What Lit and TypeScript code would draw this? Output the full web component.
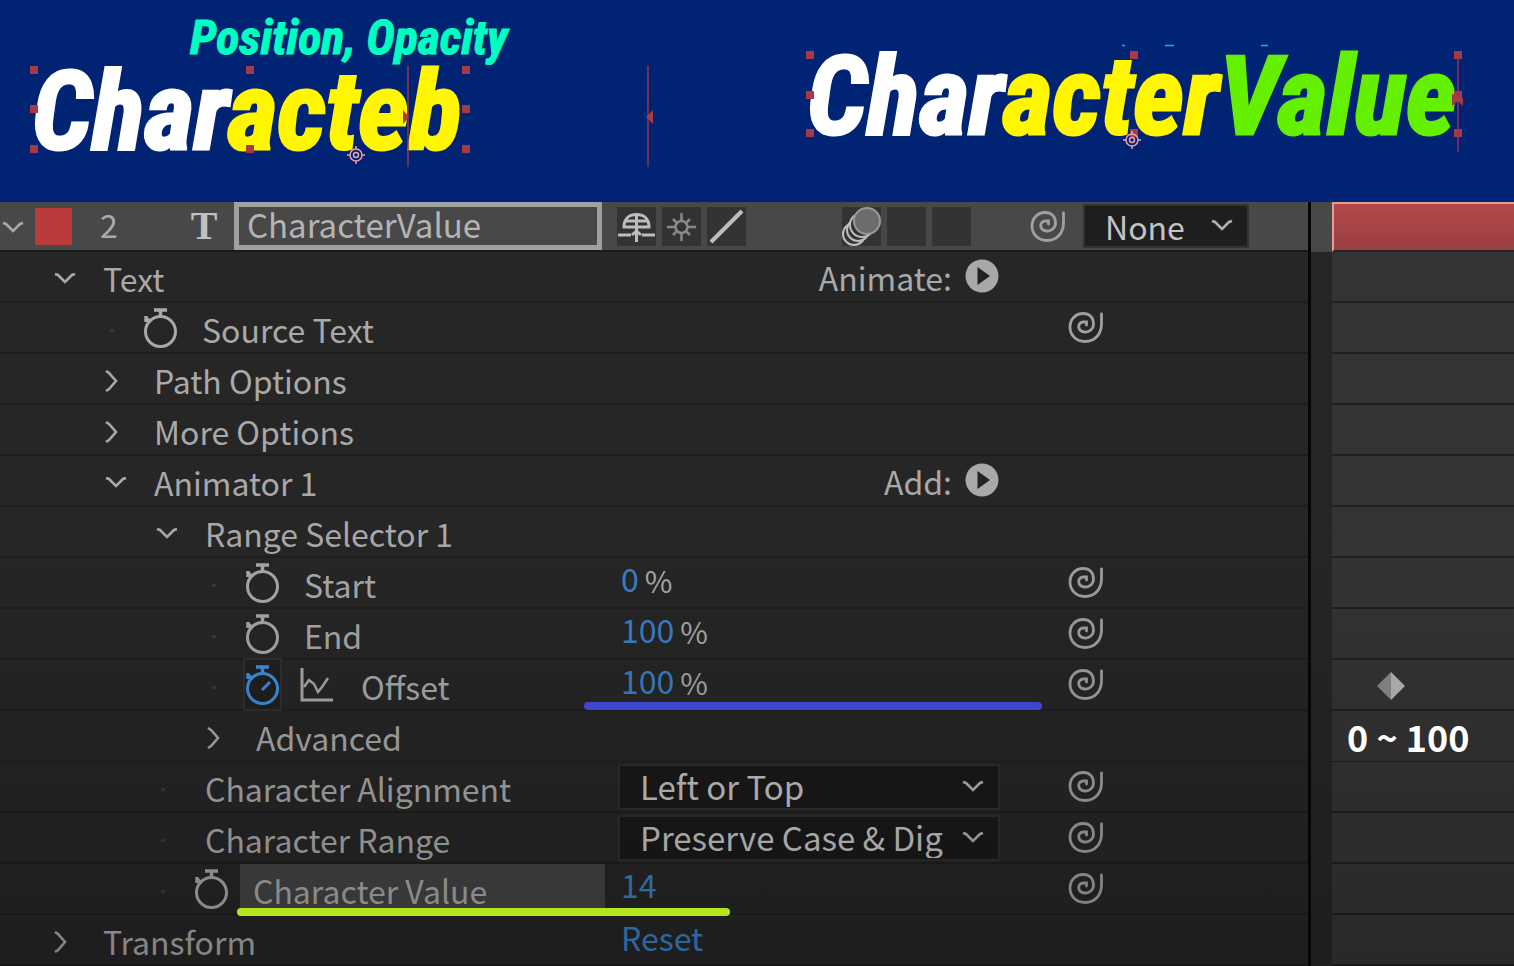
import { LitElement, html, svg, css, nothing } from "lit";
import { customElement, property } from "lit/decorators.js";
import { classMap } from "lit/directives/class-map.js";

type Row = {
  label: string;
  level: number;
  twirl?: "open" | "closed";
  watch?: "off" | "on";
  graph?: boolean;
  menu?: string;
  value?: string;
  unit?: string;
  select?: string;
  reset?: boolean;
  link?: boolean;
  selected?: boolean;
  key?: boolean;
  note?: string;
  mark?: "blue" | "lime";
};

const ROWS: Row[] = [
  { label: "Text", level: 0, twirl: "open", menu: "Animate:" },
  { label: "Source Text", level: 1, watch: "off", link: true },
  { label: "Path Options", level: 1, twirl: "closed" },
  { label: "More Options", level: 1, twirl: "closed" },
  { label: "Animator 1", level: 1, twirl: "open", menu: "Add:" },
  { label: "Range Selector 1", level: 2, twirl: "open" },
  { label: "Start", level: 3, watch: "off", value: "0", unit: "%", link: true },
  { label: "End", level: 3, watch: "off", value: "100", unit: "%", link: true },
  { label: "Offset", level: 3, watch: "on", graph: true, value: "100", unit: "%", link: true, key: true, mark: "blue" },
  { label: "Advanced", level: 3, twirl: "closed", note: "0 ~ 100" },
  { label: "Character Alignment", level: 2, select: "Left or Top", link: true },
  { label: "Character Range", level: 2, select: "Preserve Case & Dig", link: true },
  { label: "Character Value", level: 2, watch: "off", value: "14", link: true, selected: true, mark: "lime" },
  { label: "Transform", level: 0, twirl: "closed", reset: true },
];

const chevronDown = html`<svg width="24" height="14" viewBox="0 0 24 14" fill="none" stroke="currentColor" stroke-width="2.6"><path d="M2 2 5 3 12 10 19 3 22 2"/></svg>`;
const chevronRight = html`<svg width="24" height="24" viewBox="0 0 24 24" fill="none" stroke="currentColor" stroke-width="2.6"><path d="M2 2 5 4 12 12 5 20 2 22"/></svg>`;
const spiral = html`<svg width="36" height="31" viewBox="0 0 36 31" fill="none" stroke="currentColor" stroke-width="2.8" stroke-linecap="round"><path d="M33.500 2V12C33.500 22 27 29.500 17 29.500C8 29.500 2 23 2 15C2 7 8 1.500 15 1.500C22 1.500 25.500 6 25.500 12C25.500 17 21 20.500 17 20C9.500 19.500 8.500 11 15 10L18.500 10V13"/></svg>`;
const stopwatch = (on: boolean) => html`<svg width="35" height="40" viewBox="0 0 35 40" fill="none" stroke="currentColor" stroke-width="3"><circle cx="17.500" cy="23.500" r="15"/><path d="M11 2H24M17.500 2V9M3 8V14M3 10 8 14" stroke-width="3.5"/>${on ? svg`<path d="M17 25 25 17" stroke-width="3"/>` : nothing}</svg>`;
const graphIcon = html`<svg width="34" height="36" viewBox="0 0 34 36" fill="none" stroke="currentColor"><path d="M2 1V33H33" stroke-width="3"/><path d="M4 20 9 13 14 17 18 25 22 20 28 11" stroke-width="2.5"/></svg>`;
const playIcon = html`<svg width="34" height="34" viewBox="0 0 34 34"><circle cx="17" cy="17" r="16.500" fill="currentColor"/><path d="M12.500 8V26L25 17Z" fill="#232323"/></svg>`;

@customElement("text-viewport")
class TextViewport extends LitElement {
  @property() side: "left" | "right" = "left";

  static styles = css`
    :host { display: block; flex: 1 1 0; min-width: 0; position: relative; height: 202px; }
    .title, .caption { position: absolute; margin: 0; white-space: nowrap; font-family: "Roboto Condensed", Roboto, sans-serif; font-style: italic; font-weight: 700; }
    .title { font-size: 109px; line-height: 80px; -webkit-text-stroke: 3px currentColor; }
    .left .title { left: 32px; top: 72px; }
    .right .title { left: 50px; top: 57px; }
    .caption { font-size: 48px; line-height: 48px; left: 190px; top: 14px; color: #00ffc0; -webkit-text-stroke: 1px currentColor; }
    .white { color: #fff; }
    .yellow { color: #fff600; }
    .green { color: #64f000; }
    .overlay { position: absolute; inset: 0; width: 757px; height: 202px; overflow: visible; }
  `;

  private handles(xs: number[], ys: number[]) {
    return ys.flatMap((y, j) => xs.filter((_, i) => !(i === 1 && j === 1)).map((x) => svg`<rect x=${x - 4} y=${y - 4} width="8" height="8" fill="#a83a45"/>`));
  }

  private anchor(x: number, y: number) {
    return svg`<g transform="translate(${x} ${y})" fill="none" stroke="#f3a0a8" stroke-width="1.5"><circle r="6"/><circle r="2.500"/><path d="M0-9V-6M0 6V9M-9 0H-6M6 0H9"/></g>`;
  }

  render() {
    if (this.side === "left") {
      return html`<div class="left">
        <p class="caption">Position, Opacity</p>
        <p class="title"><span class="white">Char</span><span class="yellow">acteb</span></p>
        <svg class="overlay">
          ${this.handles([34, 250, 466], [70, 109, 149])}
          <path d="M408 66V167M648 66V167" stroke="#8f3350" stroke-width="1.500"/>
          <path d="M403 110V124L409 117ZM653 110V124L646 117Z" fill="#a83a45"/>
          ${this.anchor(356, 155)}
        </svg>
      </div>`;
    }
    return html`<div class="right">
      <p class="title"><span class="white">Char</span><span class="yellow">acter</span><span class="green">Value</span></p>
      <svg class="overlay">
        ${this.handles([53, 377, 701], [55, 95, 133])}
        <path d="M701 55V152" stroke="#8f3350" stroke-width="1.500"/>
        <path d="M695 94V106L701 101 706 106V98Z" fill="#a83a45"/>
        <path d="M365 45.500H368M408 45.500H417M504 45.500H511" stroke="#14b8cf" stroke-width="1.500"/>
        ${this.anchor(375, 140)}
      </svg>
    </div>`;
  }
}

@customElement("app-root")
class AppRoot extends LitElement {
  static styles = css`
    :host { display: block; min-height: 100vh; background: #252525; color: #a9a9a9; font: 32px/50px "Noto Sans CJK KR", "Noto Sans", sans-serif; font-weight: 400; }
    * { box-sizing: border-box; }
    svg { display: block; flex: none; }
    button, input, select { font: inherit; color: inherit; background: none; border: 0; padding: 0; margin: 0; border-radius: 0; }
    .preview { display: flex; background: #002473; overflow: hidden; }
    .timeline { position: relative; }
    .timeline::after { content: ""; position: absolute; inset: 0; pointer-events: none; background: linear-gradient(transparent 40%, rgba(0, 0, 0, .22)); }
    .row { display: grid; grid-template-columns: minmax(0, 1fr) 206px; height: 51px; position: relative; }
    .props { display: grid; grid-template-columns: 618px 382px 1fr; background: #262626; border-bottom: 2px solid #1e1e1e; min-width: 0; }
    .track { border-left: 3px solid #060606; background: #262626; padding-left: 21px; display: grid; min-width: 0; }
    .lane { background: #343434; border-bottom: 2px solid #202020; display: flex; align-items: center; white-space: nowrap; }
    .name { display: flex; align-items: center; min-width: 0; height: 49px; }
    .twirl { width: 92px; flex: none; padding: 5px 0 0 53px; height: 49px; display: flex; align-items: center; }
    .dot::before { content: ""; width: 4px; height: 3px; margin-left: 6px; background: #393939; }
    .label { margin-left: 11px; height: 49px; padding-top: 2px; line-height: 49px; white-space: nowrap; }
    .timed { padding-left: 13px; }
    .selected { background: #444; flex: 1; margin-right: 13px; }
    .watch { width: 35px; height: 49px; display: flex; align-items: center; justify-content: center; }
    .on { color: #3f8fe0; background: #202020; outline: 2px solid #303030; }
    .graph { margin: 0 3px 0 20px; }
    .value { display: flex; align-items: center; height: 45px; line-height: 45px; min-width: 0; white-space: nowrap; }
    .number { color: #3b80c4; height: 44px; padding-bottom: 4px; margin-left: 3px; }
    .unit { margin-left: 6px; font-size: 30px; }
    .reset { color: #3b80c4; margin-left: 3px; }
    .menu { flex: 1; display: flex; align-items: center; justify-content: flex-end; gap: 13px; height: 49px; padding-right: 1px; }
    .menu svg { margin-top: 2px; }
    .menu .word { padding-top: 5px; }
    .picker { position: relative; display: grid; align-items: center; width: 100%; height: 46px; margin-top: 4px; color: #c4c4c4; }
    .picker select { appearance: none; width: 100%; height: 46px; padding: 0 46px 0 20px; font-size: 33px; background: #191919; border: 2px solid #2d2d2d; line-height: 41px; }
    .picker svg { position: absolute; right: 15px; color: #b0b0b0; pointer-events: none; }
    .link { padding-left: 68px; display: flex; align-items: center; height: 48px; color: #a0a0a0; }
    .mark { position: absolute; height: 8px; border-radius: 4px; z-index: 1; }
    .blue { left: 584px; width: 458px; bottom: 1px; background: #3f48cc; }
    .lime { left: 237px; width: 493px; bottom: -1px; background: #b5e61d; }
    .note { position: relative; z-index: 1; padding-left: 15px; color: #fff; font-size: 36px; font-weight: 700; }
    .key { margin: 3px 0 0 45px; }

    .head { height: 50px; }
    .head .props { display: flex; align-items: center; background: #484848; border-bottom-color: #1b1b1b; }
    .head .track { background: #484848; }
    .head .lane { background: #a84447 linear-gradient(#b3484a, #993f42); border: 2px solid #e89a98; border-right: 0; border-bottom-color: #252525; }
    .head .tw { width: 35px; display: flex; padding: 4px 0 0 1px; }
    .swatch { width: 37px; height: 37px; background: #b93b3b; border-radius: 2px; }
    .index { width: 62px; text-align: center; margin-left: 6px; line-height: 42px; height: 46px; }
    .kind { width: 60px; margin-left: 34px; text-align: center; font-family: "Liberation Serif", serif; font-weight: 700; font-size: 40px; line-height: 46px; color: #c0c0c0; }
    .layer { width: 368px; height: 48px; border: 5px solid #a0a0a0; padding: 0 8px 4px; font-size: 33px; color: #b4b4b4; line-height: 34px; }
    .switches { display: flex; gap: 6px; margin-left: 15px; }
    .switches + .switches { margin-left: 96px; }
    .switch { width: 39px; height: 39px; background: #333; display: grid; place-items: center; color: #bdbdbd; }
    .head .spiral { width: 36px; margin-left: 59px; color: #a0a0a0; }
    .head .picker { width: 166px; margin: 0 0 0 17px; height: 44px; }
    .head .picker select { height: 44px; background: #1e1e1e; border-color: #333; padding-bottom: 4px; font-size: 32px; }
  `;

  private twirl(row: Row) {
    if (!row.twirl) return html`<span class="twirl dot"></span>`;
    return html`<button class="twirl" aria-label="Toggle ${row.label}">${row.twirl === "open" ? chevronDown : chevronRight}</button>`;
  }

  private picker(name: string, text: string) {
    return html`<div class="picker"><select aria-label=${name}><option>${text}</option></select>${chevronDown}</div>`;
  }

  private value(row: Row) {
    if (row.menu) return html`<div class="menu"><span class="word">${row.menu}</span><button aria-label="${row.menu}">${playIcon}</button></div>`;
    if (row.select) return this.picker(row.label, row.select);
    if (row.reset) return html`<button class="reset">Reset</button>`;
    if (row.value) return html`<input class="number" aria-label=${row.label} .value=${row.value} style="width:${row.value.length}ch">${row.unit ? html`<span class="unit">${row.unit}</span>` : nothing}`;
    return nothing;
  }

  private row(row: Row) {
    return html`<div class="row">
      <div class="props">
        <div class="name" style="padding-left:${row.level * 51}px">
          ${this.twirl(row)}
          ${row.watch ? html`<button class=${classMap({ watch: true, on: row.watch === "on" })} aria-label="Time-vary ${row.label}">${stopwatch(row.watch === "on")}</button>` : nothing}
          ${row.graph ? html`<button class="graph" aria-label="Graph">${graphIcon}</button>` : nothing}
          <span class=${classMap({ label: true, timed: !!row.watch, selected: !!row.selected })}>${row.label}</span>
        </div>
        <div class="value">${this.value(row)}</div>
        <div class="link">${row.link ? html`<button aria-label="Expression for ${row.label}">${spiral}</button>` : nothing}</div>
      </div>
      <div class="track"><div class="lane">
        ${row.key ? html`<svg class="key" width="28" height="28" viewBox="0 0 28 28"><path d="M14 0V28L0 14Z" fill="#8a8a8a"/><path d="M14 0V28L28 14Z" fill="#b8b8b8"/></svg>` : nothing}
        ${row.note ? html`<span class="note">${row.note}</span>` : nothing}
      </div></div>
      ${row.mark ? html`<i class="mark ${row.mark}"></i>` : nothing}
    </div>`;
  }

  render() {
    return html`
      <div class="preview"><text-viewport side="left"></text-viewport><text-viewport side="right"></text-viewport></div>
      <div class="timeline">
        <div class="row head">
          <div class="props">
            <button class="tw" aria-label="Toggle layer">${chevronDown}</button>
            <button class="swatch" aria-label="Layer colour"></button>
            <span class="index">2</span>
            <span class="kind">T</span>
            <input class="layer" aria-label="Layer name" .value=${"CharacterValue"}>
            <div class="switches">
              <button class="switch" aria-label="Shy"><svg width="39" height="39" viewBox="0 0 39 39" fill="none" stroke="currentColor" stroke-width="3"><path d="M7 20C7 11 13 7.500 19.500 7.500S32 11 32 20ZM19.500 7V35M9 14H30M1 28H14M25 28H38M15 28 19.500 24 24 28"/></svg></button>
              <button class="switch" aria-label="Collapse"><svg width="39" height="39" viewBox="0 0 39 39" fill="none" stroke="#888" stroke-width="2.5"><circle cx="19.500" cy="20" r="6"/><path d="M19.500 6V14M19.500 26V34M5 20H13M26 20H34M11 12 15 16M24 24 28 28M28 12 24 16M15 24 11 28"/></svg></button>
              <button class="switch" aria-label="Quality"><svg width="39" height="39" viewBox="0 0 39 39" fill="none" stroke="currentColor" stroke-width="4"><path d="M4 35 35 4"/></svg></button>
            </div>
            <div class="switches">
              <button class="switch" aria-label="Motion blur"><svg width="39" height="39" viewBox="0 0 39 39" stroke="currentColor" stroke-width="2" fill="#333"><circle cx="12" cy="27" r="11"/><circle cx="16" cy="23" r="11"/><circle cx="20" cy="18" r="12"/><circle cx="25" cy="14" r="13" fill="#6c6c6c" stroke="#999"/></svg></button>
              <button class="switch" aria-label="Adjustment layer"></button>
              <button class="switch" aria-label="3D layer"></button>
            </div>
            <button class="spiral" aria-label="Parent pick whip">${spiral}</button>
            ${this.picker("Parent", "None")}
          </div>
          <div class="track"><div class="lane"></div></div>
        </div>
        ${ROWS.map((r) => this.row(r))}
      </div>
    `;
  }
}
